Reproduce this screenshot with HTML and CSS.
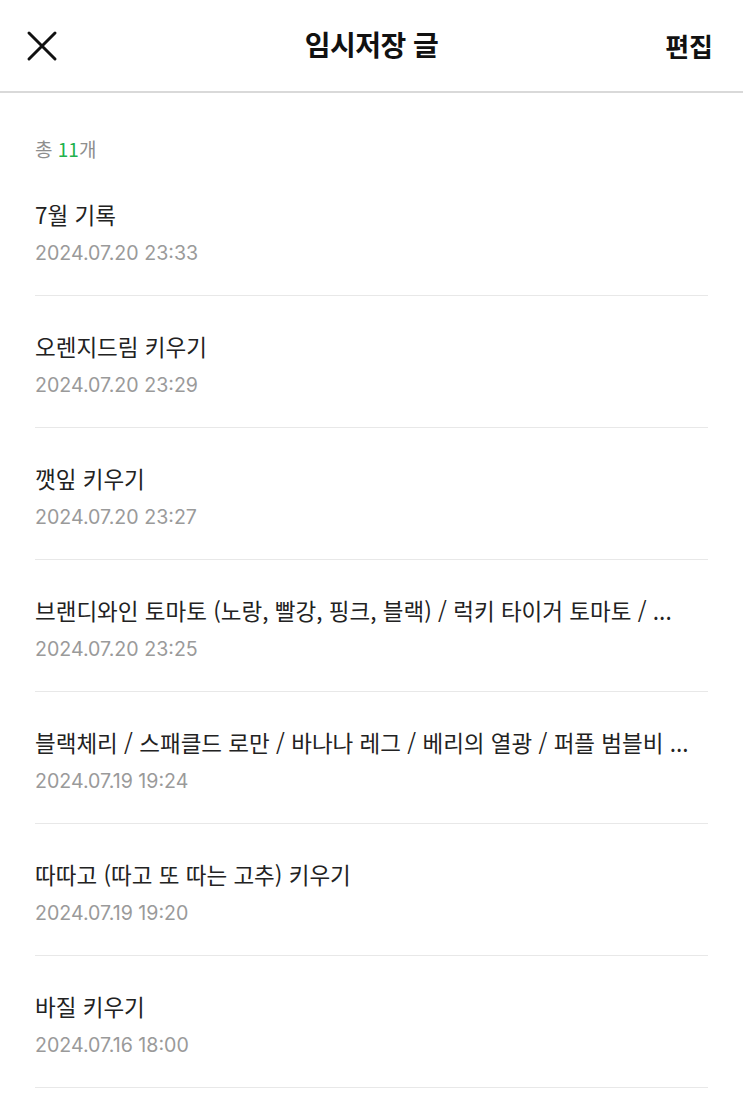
FILE: index.html
```html
<!DOCTYPE html>
<html lang="ko">
<head>
<meta charset="utf-8">
<title>임시저장 글</title>
<link rel="stylesheet" href="styles.css">
</head>
<body>
<header class="topbar">
  <button class="close" aria-label="닫기">
    <svg width="32" height="32" viewBox="0 0 32 32"><path d="M3 3 L29 29 M29 3 L3 29" stroke="#111" stroke-width="3" stroke-linecap="round" fill="none"/></svg>
  </button>
  <h1 class="title">임시저장 글</h1>
  <button class="edit">편집</button>
</header>
<main class="content">
  <p class="count">총 <span class="num">11</span>개</p>
  <ul class="list">
    <li class="item"><div class="item-title">7월 기록</div><div class="item-date">2024.07.20 23:33</div></li>
    <li class="item"><div class="item-title">오렌지드림 키우기</div><div class="item-date">2024.07.20 23:29</div></li>
    <li class="item"><div class="item-title">깻잎 키우기</div><div class="item-date">2024.07.20 23:27</div></li>
    <li class="item"><div class="item-title">브랜디와인 토마토 (노랑, 빨강, 핑크, 블랙) / 럭키 타이거 토마토 / ...</div><div class="item-date">2024.07.20 23:25</div></li>
    <li class="item"><div class="item-title">블랙체리 / 스패클드 로만 / 바나나 레그 / 베리의 열광 / 퍼플 범블비 ...</div><div class="item-date">2024.07.19 19:24</div></li>
    <li class="item"><div class="item-title">따따고 (따고 또 따는 고추) 키우기</div><div class="item-date">2024.07.19 19:20</div></li>
    <li class="item"><div class="item-title">바질 키우기</div><div class="item-date">2024.07.16 18:00</div></li>
  </ul>
</main>
</body>
</html>
```
FILE: styles.css
```css
* { box-sizing: border-box; }
html, body { margin: 0; padding: 0; background: #fff; }
body {
  font-family: "Noto Sans CJK KR", "Noto Sans", sans-serif;
  color: #111;
  overflow: hidden;
}
.topbar {
  height: 93px;
  display: flex;
  align-items: center;
  justify-content: space-between;
  padding: 0 30px 0 26px;
  border-bottom: 2px solid #d9d9d9;
}
.close {
  border: 0; background: none; padding: 0;
  width: 32px; height: 32px;
  display: flex;
}
.title {
  margin: 0;
  font-size: 28px;
  font-weight: 700;
  letter-spacing: -0.5px;
  position: absolute;
  left: 0; right: 0;
  top: 24px;
  line-height: 40px;
  text-align: center;
  pointer-events: none;
}
.edit {
  border: 0; background: none; padding: 0;
  font-family: inherit;
  font-size: 26px;
  font-weight: 700;
  color: #111;
}
.content { padding: 0 35px; }
.count {
  margin: 0;
  padding: 43px 0 2px;
  font-size: 19px;
  line-height: 26px;
  color: #8e8e8e;
}
.num { color: #22b14c; }
.list { list-style: none; margin: 0; padding: 0; }
.item {
  padding: 35px 0 29px;
  border-bottom: 1px solid #e8e8e8;
}
.item-title {
  font-size: 22.5px;
  line-height: 30px;
  color: #222;
  white-space: nowrap;
  overflow: hidden;
}
.item-date {
  margin-top: 11px;
  font-family: "Inter", "Noto Sans", sans-serif;
  font-size: 19.6px;
  line-height: 26px;
  color: #9a9a9a;
}
```
